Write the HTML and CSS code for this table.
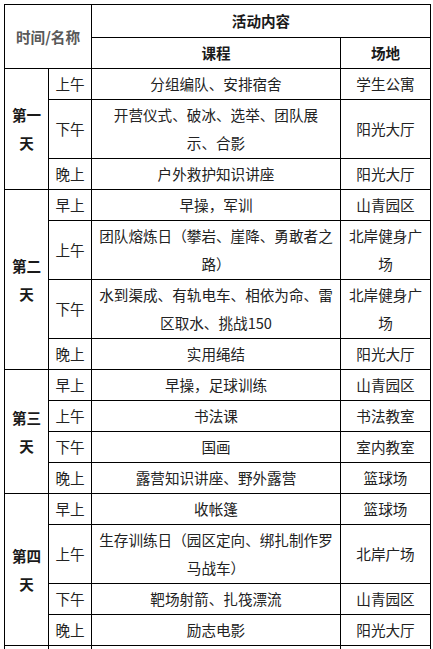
FILE: index.html
```html
<!DOCTYPE html>
<html lang="zh">
<head>
<meta charset="utf-8">
<link rel="stylesheet" href="styles.css">
</head>
<body>
<table class="schedule">
  <colgroup>
    <col class="c-day">
    <col class="c-time">
    <col class="c-course">
    <col class="c-place">
  </colgroup>
  <thead>
    <tr class="head1">
      <th colspan="2" rowspan="2" class="name">时间/名称</th>
      <th colspan="2">活动内容</th>
    </tr>
    <tr>
      <th>课程</th>
      <th>场地</th>
    </tr>
  </thead>
  <tbody>
    <tr><td rowspan="3" class="day">第一天</td><td>上午</td><td>分组编队、安排宿舍</td><td>学生公寓</td></tr>
    <tr><td>下午</td><td>开营仪式、破冰、选举、团队展<br>示、合影</td><td>阳光大厅</td></tr>
    <tr><td>晚上</td><td>户外救护知识讲座</td><td>阳光大厅</td></tr>

    <tr><td rowspan="4" class="day">第二天</td><td>早上</td><td>早操，军训</td><td>山青园区</td></tr>
    <tr><td>上午</td><td>团队熔炼日（攀岩、崖降、勇敢者之路）</td><td>北岸健身广场</td></tr>
    <tr><td>下午</td><td>水到渠成、有轨电车、相依为命、雷区取水、挑战150</td><td>北岸健身广场</td></tr>
    <tr><td>晚上</td><td>实用绳结</td><td>阳光大厅</td></tr>

    <tr><td rowspan="4" class="day">第三天</td><td>早上</td><td>早操，足球训练</td><td>山青园区</td></tr>
    <tr><td>上午</td><td>书法课</td><td>书法教室</td></tr>
    <tr><td>下午</td><td>国画</td><td>室内教室</td></tr>
    <tr><td>晚上</td><td>露营知识讲座、野外露营</td><td>篮球场</td></tr>

    <tr><td rowspan="4" class="day">第四天</td><td>早上</td><td>收帐篷</td><td>篮球场</td></tr>
    <tr><td>上午</td><td>生存训练日（园区定向、绑扎制作罗马战车）</td><td>北岸广场</td></tr>
    <tr><td>下午</td><td>靶场射箭、扎筏漂流</td><td>山青园区</td></tr>
    <tr><td>晚上</td><td>励志电影</td><td>阳光大厅</td></tr>

    <tr class="blank"><td>&nbsp;</td><td>&nbsp;</td><td>&nbsp;</td><td>&nbsp;</td></tr>
  </tbody>
</table>
</body>
</html>
```

FILE: styles.css
```css
html, body {
  margin: 0;
  padding: 0;
  background: #fff;
}
body {
  padding: 4px 0 0 4px;
  font-family: "Noto Sans CJK SC", "Noto Sans", sans-serif;
  font-size: 14.6px;
  color: #222;
}
.schedule {
  border-collapse: collapse;
  table-layout: fixed;
  width: 426px;
}
.c-day { width: 44px; }
.c-time { width: 43px; }
.c-course { width: 249px; }
.c-place { width: 90px; }
.schedule th,
.schedule td {
  border: 1px solid #000;
  padding: 1px 6px;
  line-height: 28px;
  text-align: center;
  vertical-align: middle;
  word-break: break-all;
}
.schedule td:nth-last-child(3) {
  padding: 1px 4px;
}
.schedule th {
  font-weight: bold;
  color: #1a1a1a;
}
.schedule .head1 th {
  padding-top: 2px;
  padding-bottom: 2px;
}
.schedule th.name {
  color: #595959;
  padding: 0 4px;
}
.schedule td.day {
  font-weight: bold;
  color: #1a1a1a;
  padding: 1px 6px;
}
```
